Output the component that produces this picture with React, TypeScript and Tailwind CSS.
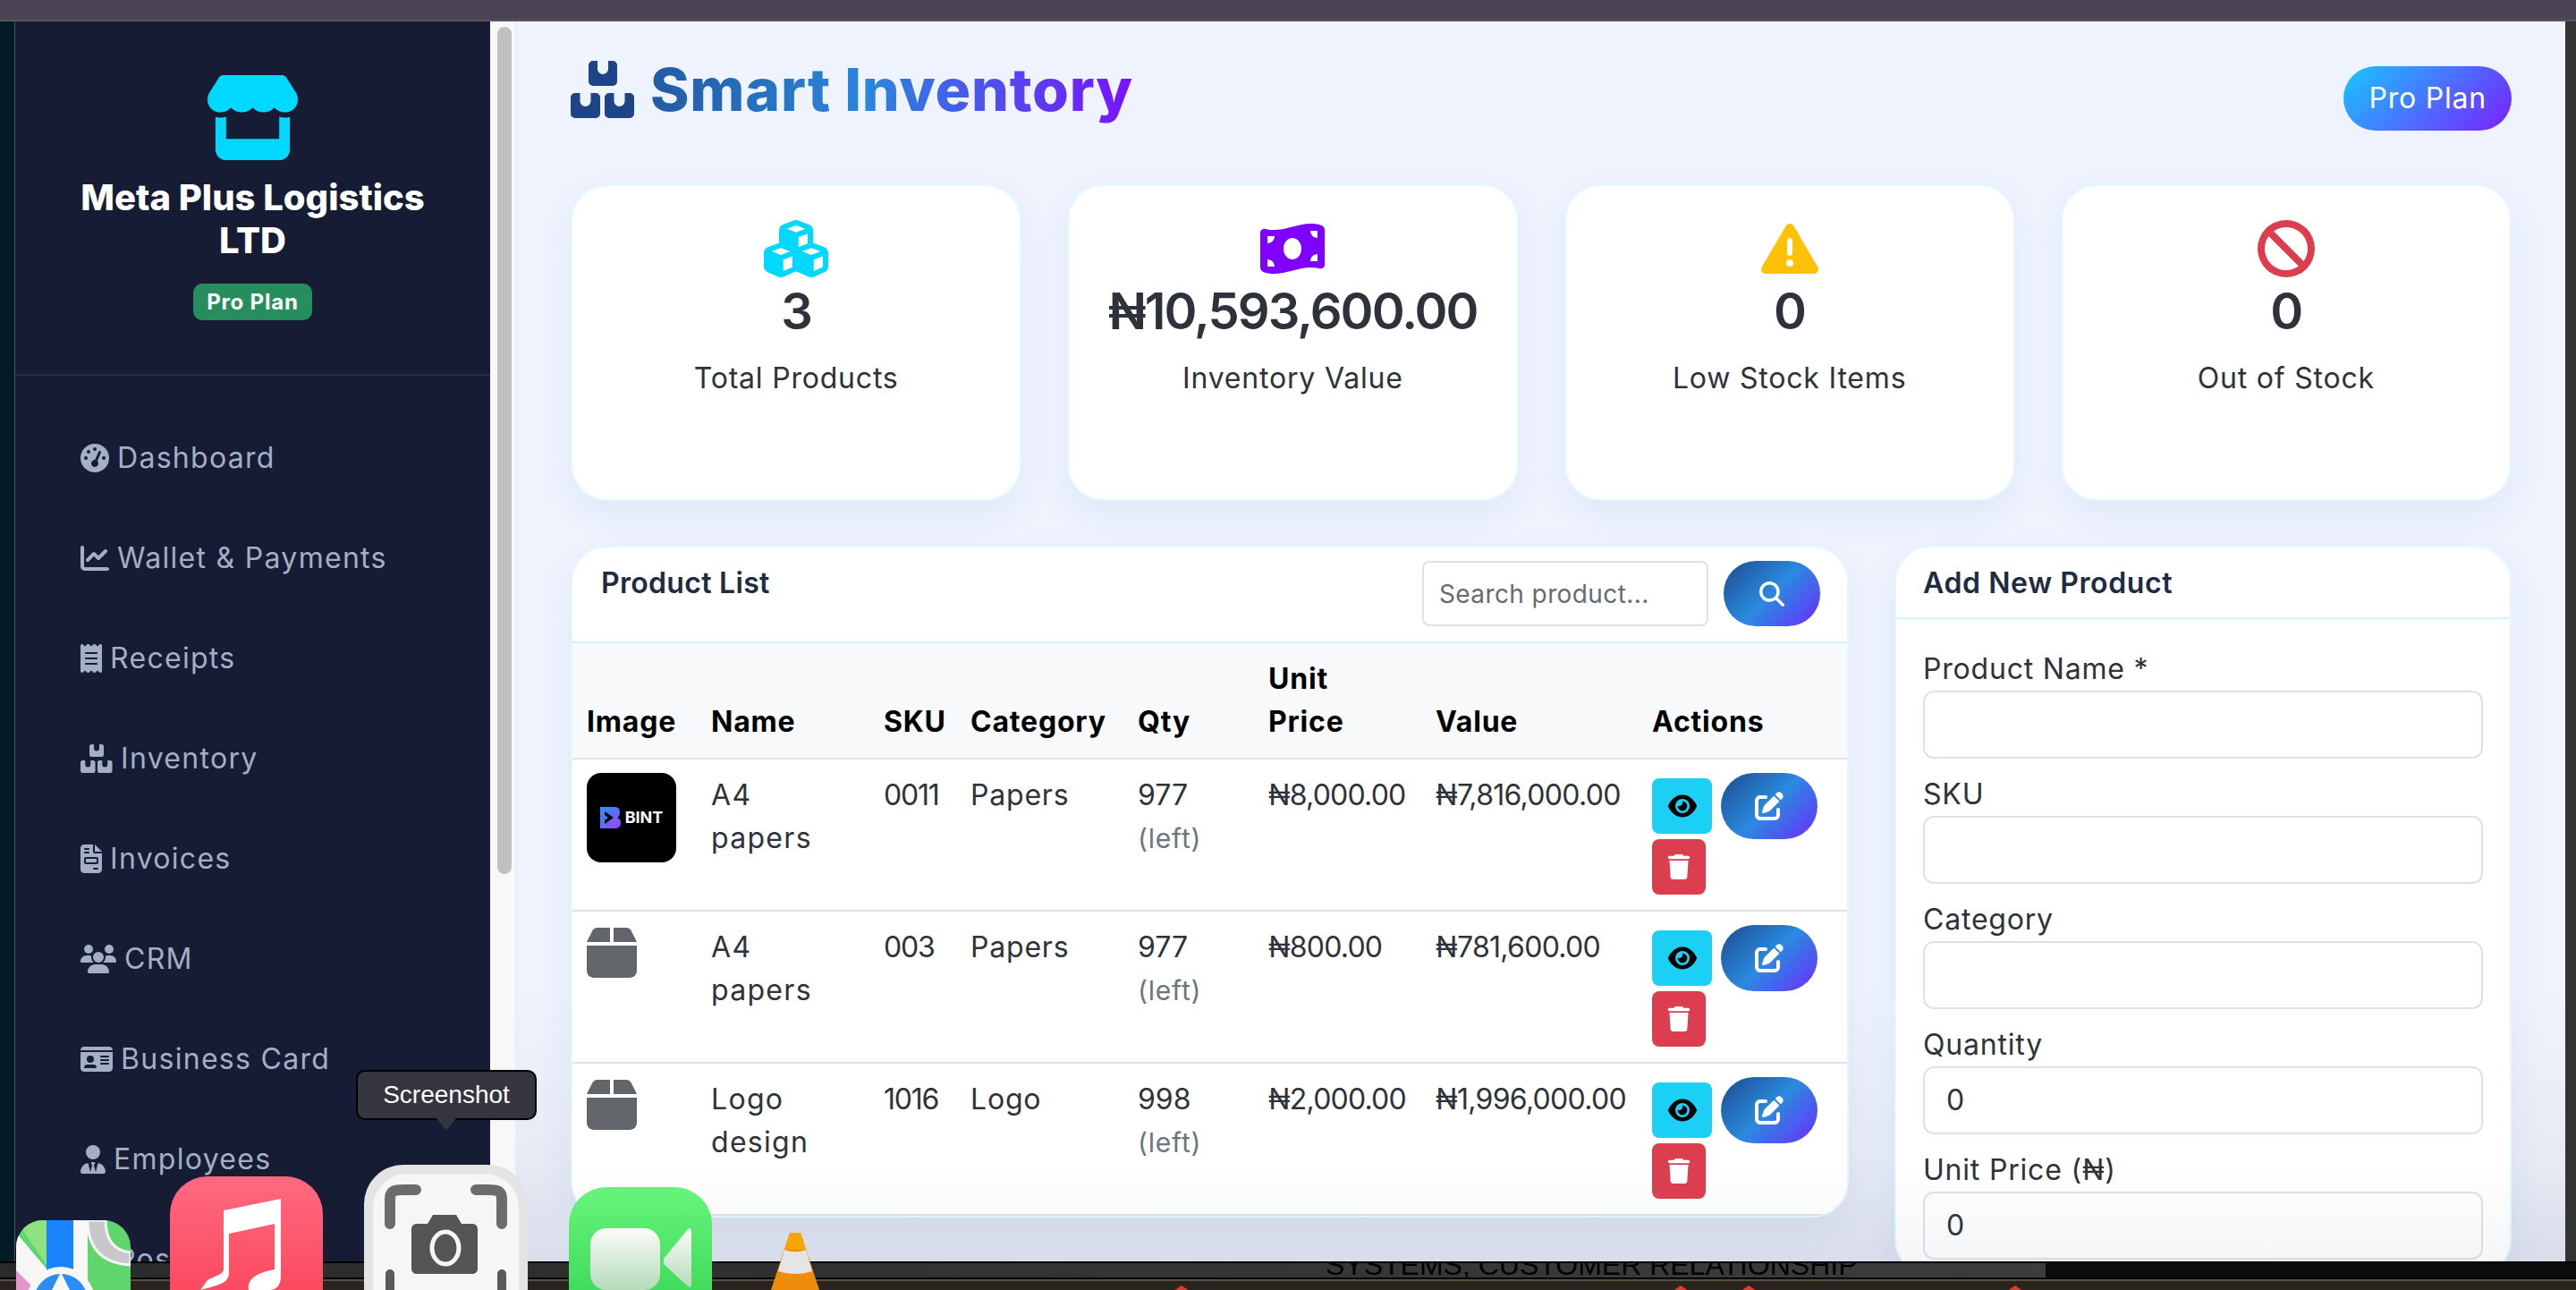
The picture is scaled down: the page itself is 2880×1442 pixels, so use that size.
import {
  FaBan,
  FaBox,
  FaCashRegister,
  FaChartLine,
  FaCubes,
  FaEye,
  FaFileInvoice,
  FaGaugeHigh,
  FaIdCard,
  FaMagnifyingGlass,
  FaMoneyBillWave,
  FaPenToSquare,
  FaReceipt,
  FaStore,
  FaTrash,
  FaTriangleExclamation,
  FaUsers,
  FaUserTie,
} from "react-icons/fa6";

// three rounded cartons with a tape slot, as in the inventory logo
const cartonPath = (x: number, y: number, w: number) => {
  const slot = (w - 12) / 2;
  return `M${x + 5} ${y}H${x + slot}V${y + 9}a6 6 0 0 0 12 0V${y}H${x + w - 5}a5 5 0 0 1 5 5V${y + 23}a5 5 0 0 1-5 5H${x + 5}a5 5 0 0 1-5-5V${y + 5}a5 5 0 0 1 5-5z`;
};

function BoxesIcon({ className }: { className?: string }) {
  return (
    <svg className={className} viewBox="0 0 72 64" fill="currentColor">
      <path d={cartonPath(20, 0, 32)} />
      <path d={cartonPath(0, 36, 33)} />
      <path d={cartonPath(38, 36, 33)} />
    </svg>
  );
}

const navItems = [
  { label: "Dashboard", icon: FaGaugeHigh, w: "w-[32px]" },
  { label: "Wallet & Payments", icon: FaChartLine, w: "w-[32px]" },
  { label: "Receipts", icon: FaReceipt, w: "w-[24px]" },
  { label: "Inventory", icon: BoxesIcon, w: "w-[36px]" },
  { label: "Invoices", icon: FaFileInvoice, w: "w-[24px]" },
  { label: "CRM", icon: FaUsers, w: "w-[40px]" },
  { label: "Business Card", icon: FaIdCard, w: "w-[36px]" },
  { label: "Employees", icon: FaUserTie, w: "w-[28px]" },
  { label: "Pos", icon: FaCashRegister, w: "w-[32px]" },
];

const stats = [
  { label: "Total Products", value: "3", icon: FaCubes, color: "w-[72px] text-[#00d8ff]" },
  { label: "Inventory Value", value: "₦10,593,600.00", icon: FaMoneyBillWave, color: "w-[72px] text-[#7f00ff]" },
  { label: "Low Stock Items", value: "0", icon: FaTriangleExclamation, color: "w-[64px] text-[#ffc107]" },
  { label: "Out of Stock", value: "0", icon: FaBan, color: "w-[64px] text-[#dc3d4f]" },
];

const products = [
  { name: ["A4", "papers"], sku: "0011", category: "Papers", qty: "977", price: "₦8,000.00", value: "₦7,816,000.00", logo: true },
  { name: ["A4", "papers"], sku: "003", category: "Papers", qty: "977", price: "₦800.00", value: "₦781,600.00", logo: false },
  { name: ["Logo", "design"], sku: "1016", category: "Logo", qty: "998", price: "₦2,000.00", value: "₦1,996,000.00", logo: false },
];

const fields = [
  { label: "Product Name *", value: "" },
  { label: "SKU", value: "" },
  { label: "Category", value: "" },
  { label: "Quantity", value: "0" },
  { label: "Unit Price (₦)", value: "0" },
];

function BintLogo() {
  return (
    <div className="flex h-[100px] w-[100px] items-center justify-center gap-[5px] rounded-[16px] bg-black">
      <svg width="23" height="24" viewBox="0 0 23 24">
        <defs>
          <linearGradient id="bint" x1="0" y1="0" x2="1" y2="1">
            <stop offset="0" stopColor="#1e9bf5" />
            <stop offset="1" stopColor="#a23cff" />
          </linearGradient>
        </defs>
        <path d="M0 0h16c5 0 6 3 6 6 0 3-1 5-3 6 3 1 4 3 4 6 0 4-3 6-7 6H0z" fill="url(#bint)" />
        <path d="M5 5l10 7-10 7v-4l4-3-4-3z" fill="#000" />
      </svg>
      <span className="text-[18px] leading-none font-bold tracking-normal text-white">BINT</span>
    </div>
  );
}

function ActionButtons() {
  return (
    <div className="flex flex-wrap items-center gap-x-[10px]">
      <button className="flex h-[62px] w-[67px] items-center justify-center rounded-[8px] bg-[#1ccff4] text-black">
        <FaEye size={32} />
      </button>
      <button className="flex h-[74px] w-[108px] items-center justify-center rounded-[37px] bg-[linear-gradient(135deg,#1e4a8c,#2a8ae0,#6c2bff)] text-white">
        <FaPenToSquare size={32} />
      </button>
      <button className="flex h-[62px] w-[60px] items-center justify-center rounded-[8px] bg-[#dc3d4f] text-white">
        <FaTrash size={28} />
      </button>
    </div>
  );
}

function Dock() {
  return (
    <>
      {/* tooltip */}
      <div className="absolute top-[1196px] left-[398px] flex h-[56px] w-[202px] items-center justify-center rounded-[10px] border-2 border-black bg-[#34353f] text-[28px] tracking-normal text-white [font-family:'Liberation_Sans',sans-serif]">
        Screenshot
        <div className="absolute top-[52px] left-[88px] h-0 w-0 border-x-[11px] border-t-[14px] border-x-transparent border-t-[#34353f]" />
      </div>

      {/* maps */}
      <svg className="absolute top-[1364px] left-[18px]" width="128" height="78" viewBox="0 0 128 78">
        <defs>
          <clipPath id="maps">
            <rect width="128" height="130" rx="30" />
          </clipPath>
        </defs>
        <g clipPath="url(#maps)">
          <rect width="128" height="130" fill="#5fd56c" />
          <path d="M0 0h34v50z" fill="#8fe07f" />
          <path d="M0 14l34 40v24H0z" fill="#f6f6f6" />
          <path d="M0 56l22 22H0z" fill="#e796cb" />
          <rect x="34" width="46" height="78" fill="#f8f8f8" />
          <rect x="34" width="30" height="60" fill="#1a84ff" />
          <path d="M80 0c0 30 14 48 48 50V36C108 34 100 20 100 0z" fill="#c7c7cc" stroke="#f5f5f5" strokeWidth="3" />
          <circle cx="50" cy="90" r="38" fill="#f7f7f7" />
          <circle cx="50" cy="90" r="30" fill="#2b8cf5" />
          <path d="M50 58l14 28-14-5-14 5z" fill="#f7f7f7" />
        </g>
      </svg>

      {/* music */}
      <svg className="absolute top-[1315px] left-[190px]" width="171" height="127" viewBox="0 0 171 127">
        <defs>
          <linearGradient id="music" x1="0" y1="0" x2="0" y2="1">
            <stop offset="0" stopColor="#ff6a80" />
            <stop offset="1" stopColor="#fb3d52" />
          </linearGradient>
        </defs>
        <rect width="171" height="180" rx="42" fill="url(#music)" />
        <path d="M60 38L124 25V112C124 122 118 127 112 127H88C86 115 96 108 117 104V53L66 64V108C66 120 52 122 34 127L42 116C48 112 60 110 60 104z" fill="#fff" />
      </svg>

      {/* screenshot */}
      <svg className="absolute top-[1302px] left-[407px]" width="183" height="140" viewBox="0 0 183 140">
        <rect width="183" height="190" rx="44" fill="#e4e4e4" />
        <rect x="10" y="10" width="163" height="180" rx="38" fill="#f6f6f6" />
        <path d="M29 66V38C29 28 36 28 44 28H58" fill="none" stroke="#6c6c6c" strokeWidth="12" strokeLinecap="round" />
        <path d="M154 66V38C154 28 147 28 139 28H125" fill="none" stroke="#6c6c6c" strokeWidth="12" strokeLinecap="round" />
        <path d="M29 122V140M154 122V140" stroke="#5a5a5a" strokeWidth="10" strokeLinecap="round" />
        <path d="M53 72c0-4 3-6 6-6h12l6-10h26l6 10h12c3 0 6 2 6 6v44c0 4-3 6-6 6H59c-3 0-6-2-6-6z" fill="#555" />
        <ellipse cx="91" cy="93" rx="15" ry="18" fill="none" stroke="#f6f6f6" strokeWidth="5" />
      </svg>

      {/* facetime */}
      <svg className="absolute top-[1327px] left-[636px]" width="160" height="115" viewBox="0 0 160 115">
        <defs>
          <linearGradient id="facetime" x1="0" y1="0" x2="0" y2="1">
            <stop offset="0" stopColor="#66f57a" />
            <stop offset="1" stopColor="#30d04f" />
          </linearGradient>
          <linearGradient id="cam" x1="0" y1="0" x2="0" y2="1">
            <stop offset="0" stopColor="#fbfbfb" />
            <stop offset="1" stopColor="#b5dcba" />
          </linearGradient>
        </defs>
        <rect width="160" height="170" rx="42" fill="url(#facetime)" />
        <rect x="24" y="46" width="78" height="69" rx="18" fill="url(#cam)" />
        <path d="M106 80l26-32c3-3 5-2 5 2v58c0 4-2 5-5 2l-26-24z" fill="url(#cam)" />
      </svg>

      {/* vlc */}
      <svg className="absolute top-[1378px] left-[862px]" width="54" height="64" viewBox="0 0 54 64">
        <path d="M21 0h12l21 64H0z" fill="#ef8c0b" />
        <path d="M21 0h12l6 19H15z" fill="#f9a503" />
        <path d="M15 19c8 3 16 3 24 0l7 24c-12 4-26 4-38 0z" fill="#e5e5e5" />
      </svg>
    </>
  );
}

export default function App() {
  return (
    <div className="relative flex h-[1442px] w-[2880px] flex-col overflow-hidden bg-black text-[32px] leading-[48px] tracking-[0.8px] text-[#2e323a] [font-family:Inter,sans-serif]">
      <div className="h-[24px] shrink-0 border-b-2 border-[#5c5562] bg-[#4c4454]" />

      <div className="flex h-[1386px] shrink-0">
        <div className="w-[16px] shrink-0 bg-[#031a27]" />
        <div className="w-[1px] shrink-0 bg-[#555]" />

        {/* sidebar */}
        <aside className="w-[531px] shrink-0 rounded-bl-[20px] bg-[#161c33]">
          <div className="flex h-[396px] flex-col items-center border-b-2 border-[#2a2d42] pt-[60px]">
            <FaStore className="h-[95px] w-[107px] text-[#00d8ff]" />
            <h2 className="mt-[18px] w-[440px] text-center text-[40px] leading-[48px] font-extrabold tracking-normal text-white">
              Meta Plus Logistics LTD
            </h2>
            <span className="mt-[24px] rounded-[10px] bg-[#268d5f] px-[15px] text-[24px] leading-[41px] font-bold text-white">
              Pro Plan
            </span>
          </div>
          <nav className="flex flex-col gap-[64px] px-[73px] pt-[68px]">
            {navItems.map((item) => (
              <a key={item.label} className="flex h-[48px] items-center gap-[9px] tracking-[1.3px] text-[#a3afc3]">
                <item.icon className={`h-[32px] shrink-0 ${item.w}`} />
                {item.label}
              </a>
            ))}
          </nav>
        </aside>

        {/* scrollbar */}
        <div className="w-[28px] shrink-0 bg-[#f8f8f8] pt-[6px] pl-[8px]">
          <div className="h-[947px] w-[16px] rounded-full bg-[#c1c1c1]" />
        </div>
        <div className="w-[2px] shrink-0 bg-[#e8ecf6]" />

        {/* main */}
        <main className="relative w-[2290px] shrink-0 overflow-hidden bg-[linear-gradient(180deg,#eef3fe_78%,#e0e5f0)] px-[60px] pt-[50px]">
          <div className="mb-[60px] flex h-[72px] items-start justify-between">
            <h1 className="-mt-[16px] flex items-center gap-[17px] text-[66px] leading-[84px] font-extrabold tracking-[0.8px]">
              <BoxesIcon className="h-[64px] w-[72px] text-[#1c4487]" />
              <span className="bg-[linear-gradient(90deg,#235aa5,#2a86de_45%,#7a10ff)] bg-clip-text text-transparent">
                Smart Inventory
              </span>
            </h1>
            <span className="rounded-[36px] bg-[linear-gradient(135deg,#17c7ff,#7a1fff)] px-[28px] leading-[72px] text-white">
              Pro Plan
            </span>
          </div>

          <div className="mb-[50px] grid grid-cols-4 gap-[51px]">
            {stats.map((stat) => (
              <div
                key={stat.label}
                className="flex h-[354px] flex-col items-center rounded-[40px] border-2 border-[#e0f9ff] bg-white pt-[38px] shadow-[0_16px_40px_rgba(60,80,140,0.07)]"
              >
                <stat.icon className={`h-[64px] ${stat.color}`} />
                <div className="mt-[5px] text-[56px] leading-[67px] font-semibold tracking-[-1.9px]">{stat.value}</div>
                <div className="mt-[17px]">{stat.label}</div>
              </div>
            ))}
          </div>

          <div className="flex items-start gap-[51px]">
            {/* product list */}
            <section className="w-[1429px] shrink-0 overflow-hidden rounded-[40px] border-2 border-[#e0f9ff] bg-white shadow-[0_16px_40px_rgba(60,80,140,0.07)]">
              <div className="flex h-[107px] items-start justify-between border-b-2 border-[#cff5ff] pt-[15px] pr-[30px] pl-[32px]">
                <h3 className="pt-[1px] font-semibold tracking-[0.3px] text-[#1f2a44]">Product List</h3>
                <div className="flex gap-[17px]">
                  <div className="flex h-[73px] w-[320px] items-center rounded-[8px] border-2 border-[#dee2e6] pl-[17px] text-[28px] tracking-[0.4px] text-[#666b72]">
                    Search product...
                  </div>
                  <button className="flex h-[73px] w-[108px] items-center justify-center rounded-[36px] bg-[linear-gradient(135deg,#1e4a8c,#2a8ae0,#6c2bff)] text-white">
                    <FaMagnifyingGlass size={28} />
                  </button>
                </div>
              </div>
              <table className="w-full table-fixed border-collapse text-left">
                <thead>
                  <tr className="border-b-2 border-[#dee2e6] bg-[#f8f9fb] align-bottom text-black">
                    <th className="w-[139px] px-[16px] py-[16px] font-bold">Image</th>
                    <th className="w-[193px] px-[16px] py-[16px] font-bold">Name</th>
                    <th className="w-[97px] px-[16px] py-[16px] font-bold">SKU</th>
                    <th className="w-[187px] px-[16px] py-[16px] font-bold">Category</th>
                    <th className="w-[146px] px-[16px] py-[16px] font-bold">Qty</th>
                    <th className="w-[187px] px-[16px] py-[16px] font-bold">
                      Unit
                      <br />
                      Price
                    </th>
                    <th className="w-[242px] px-[16px] py-[16px] font-bold">Value</th>
                    <th className="px-[16px] py-[16px] font-bold">Actions</th>
                  </tr>
                </thead>
                <tbody>
                  {products.map((p) => (
                    <tr key={p.sku} className="border-b-2 border-[#dee2e6] align-top">
                      <td className="px-[16px] pt-[15px] pb-[15px]">
                        {p.logo ? <BintLogo /> : <FaBox className="-mt-[1px] h-[64px] w-[56px] text-[#62666a]" />}
                      </td>
                      <td className="px-[16px] pt-[16px] tracking-[1.3px]">
                        {p.name[0]}
                        <br />
                        {p.name[1]}
                      </td>
                      <td className="px-[16px] pt-[16px] tracking-[-1.2px]">{p.sku}</td>
                      <td className="px-[16px] pt-[16px]">{p.category}</td>
                      <td className="px-[16px] pt-[16px] tracking-[0px]">
                        {p.qty}
                        <br />
                        <span className="text-[30px] tracking-[0.8px] text-[#6c757d]">(left)</span>
                      </td>
                      <td className="px-[16px] pt-[16px] tracking-[-0.8px] whitespace-nowrap">{p.price}</td>
                      <td className="px-[16px] pt-[16px] tracking-[-0.7px] whitespace-nowrap">{p.value}</td>
                      <td className="px-[16px] pt-[15px] pb-[17px]">
                        <ActionButtons />
                      </td>
                    </tr>
                  ))}
                </tbody>
              </table>
            </section>

            {/* add product */}
            <section className="w-[690px] shrink-0 rounded-[40px] border-2 border-[#e0f9ff] bg-white shadow-[0_16px_40px_rgba(60,80,140,0.07)]">
              <div className="flex h-[80px] items-start border-b-2 border-[#cff5ff] pt-[16px] pl-[30px]">
                <h3 className="font-semibold tracking-[0.6px] text-[#1f2a44]">Add New Product</h3>
              </div>
              <div className="px-[30px] pt-[32px]">
                {fields.map((field) => (
                  <div key={field.label} className="mb-[16px]">
                    <label className="block">{field.label}</label>
                    <div className="flex h-[76px] w-full items-center rounded-[12px] border-2 border-[#dee2e6] pl-[24px]">
                      {field.value}
                    </div>
                  </div>
                ))}
              </div>
            </section>
          </div>

          {/* dock blur falling over the page */}
          <div className="pointer-events-none absolute inset-x-0 bottom-0 h-[110px] bg-[linear-gradient(180deg,rgba(90,100,130,0),rgba(90,100,130,0.06))]" />
        </main>
        <div className="w-[12px] shrink-0 bg-[#333]" />
      </div>

      {/* window behind, bottom edge */}
      <div className="relative h-[20px] shrink-0 overflow-hidden border-y-2 border-black bg-[#0c0c0c]">
        <div className="h-full w-[2287px] overflow-hidden bg-[linear-gradient(90deg,#2a2a2a,#3c3c3c)] pl-[1482px]">
          <span className="-mt-[14px] block h-[32px] text-[32px] leading-[32px] tracking-normal whitespace-nowrap text-black [font-family:'Liberation_Sans',sans-serif]">
            SYSTEMS, CUSTOMER RELATIONSHIP
          </span>
        </div>
      </div>
      <div className="relative flex-1 border-t-2 border-[#57503f] bg-[#2a2420]">
        <div className="absolute top-[5px] left-[1312px] h-0 w-0 border-x-[9px] border-b-[6px] border-x-transparent border-b-[#e8392c]" />
        <div className="absolute top-[5px] left-[1870px] h-0 w-0 border-x-[9px] border-b-[6px] border-x-transparent border-b-[#e8392c]" />
        <div className="absolute top-[5px] left-[1946px] h-0 w-0 border-x-[9px] border-b-[6px] border-x-transparent border-b-[#e8392c]" />
        <div className="absolute top-[5px] left-[2244px] h-0 w-0 border-x-[9px] border-b-[6px] border-x-transparent border-b-[#e8392c]" />
      </div>

      <Dock />
    </div>
  );
}
